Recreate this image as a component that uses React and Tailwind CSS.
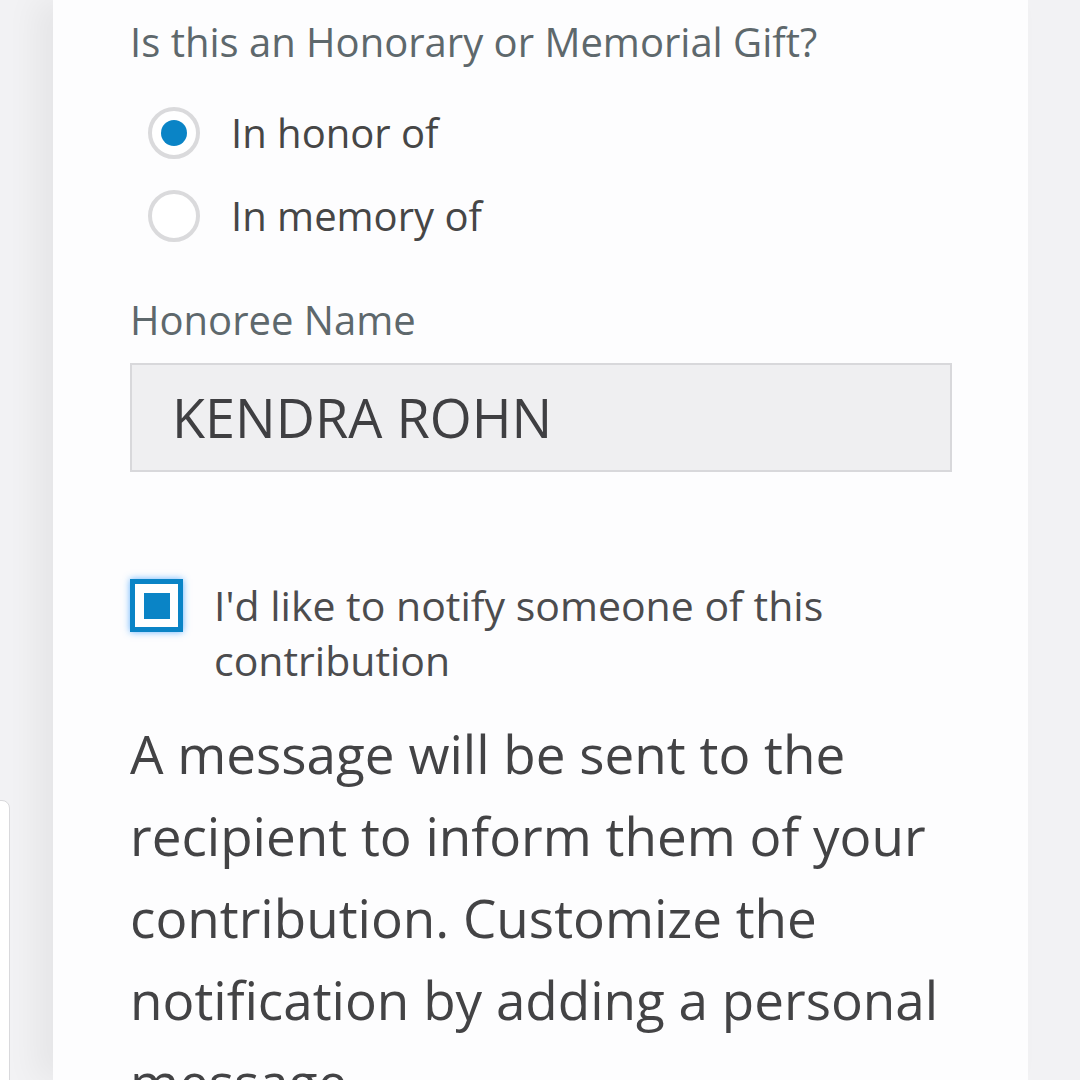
export default function App() {
  return (
    <div
      className="relative h-[1080px] w-[1080px] overflow-hidden bg-[#f2f2f4]"
      style={{ fontFamily: '"Open Sans", "Noto Sans", sans-serif' }}
    >
      <div className="absolute left-[-20px] top-[800px] h-[400px] w-[30px] rounded-lg border border-[#d9d9dc] bg-white" />

      <div className="ml-[53px] h-full w-[975px] bg-[#fdfdfe] pl-[77px] pr-[76px] pt-[14px] shadow-[-18px_0_30px_rgba(0,0,0,0.05)]">
        <p className="text-[40px] leading-[56px] text-[#5e686c]">Is this an Honorary or Memorial Gift?</p>

        <div className="mt-[37px] flex flex-col gap-[31px] pl-[18px]">
          <label className="flex items-center gap-[31px]">
            <span className="flex h-[52px] w-[52px] items-center justify-center rounded-full border-[4px] border-[#dadadc] bg-white">
              <span className="h-[26px] w-[26px] rounded-full bg-[#0a84c6]" />
            </span>
            <span className="text-[40px] leading-[52px] text-[#464646]">In honor of</span>
          </label>
          <label className="flex items-center gap-[31px]">
            <span className="h-[52px] w-[52px] rounded-full border-[4px] border-[#dadadc] bg-white" />
            <span className="text-[40px] leading-[52px] text-[#464646]">In memory of</span>
          </label>
        </div>

        <p className="mt-[50px] text-[40px] leading-[56px] text-[#5e686c]">Honoree Name</p>

        <div className="mt-[15px] flex h-[109px] items-center border-2 border-[#d8d8db] bg-[#efeff1] pl-[40px]">
          <span className="text-[54px] text-[#3f3f42]">KENDRA ROHN</span>
        </div>

        <div className="mt-[106px] flex items-start gap-[31px]">
          <span className="mt-[1px] flex h-[53px] w-[53px] shrink-0 items-center justify-center border-[5px] border-[#0a84c6] bg-white shadow-[0_0_7px_rgba(40,150,255,0.7)]">
            <span className="h-[26px] w-[26px] bg-[#0a84c6]" />
          </span>
          <p className="text-[41px] leading-[55px] text-[#4c4c4e]">
            I'd like to notify someone of this
            <br />
            contribution
          </p>
        </div>

        <p className="mt-[25px] text-[53px] leading-[82px] text-[#434345]">
          A message will be sent to the
          <br />
          recipient to inform them of your
          <br />
          contribution. Customize the
          <br />
          notification by adding a personal
          <br />
          message.
        </p>
      </div>
    </div>
  );
}
